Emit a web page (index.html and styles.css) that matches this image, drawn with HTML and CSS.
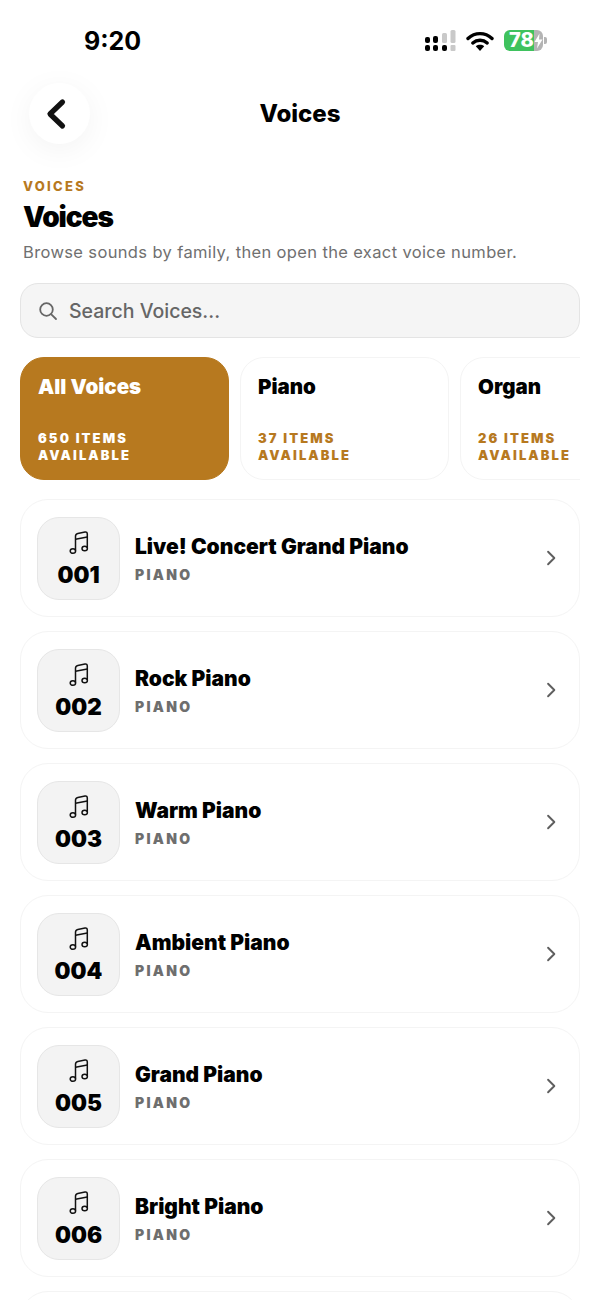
FILE: index.html
```html
<!DOCTYPE html>
<html lang="en">
<head>
  <meta charset="UTF-8" />
  <meta name="viewport" content="width=device-width, initial-scale=1.0"/>
  <title>Voices</title>
  <link rel="stylesheet" href="styles.css">
</head>
<body>
  <svg class="defs" width="0" height="0">
    <symbol id="note" viewBox="0 0 20 26">
      <path d="M6.500 20.500V6.200C6.500 4.600 7.300 3.700 8.800 3.400L16 2C17.500 1.700 18.300 2.500 18.300 4V18" fill="none" stroke="currentColor" stroke-width="1.500" stroke-linejoin="round"/>
      <path d="M6.500 9.300L18.300 7" fill="none" stroke="currentColor" stroke-width="1.500"/>
      <ellipse cx="3.900" cy="21" rx="2.700" ry="2.300" fill="none" stroke="currentColor" stroke-width="1.500"/>
      <ellipse cx="15.700" cy="18.500" rx="2.700" ry="2.300" fill="none" stroke="currentColor" stroke-width="1.500"/>
    </symbol>
    <symbol id="chev" viewBox="0 0 24 24">
      <path d="M8.500 4.500L16 12L8.500 19.500" fill="none" stroke="currentColor" stroke-width="2.300" stroke-linecap="round" stroke-linejoin="round"/>
    </symbol>
  </svg>

  <div class="status">
    <span class="time">9:20</span>
    <div class="status-icons">
      <svg class="signal" width="31" height="21" viewBox="0 0 31 21">
        <rect x="0" y="7" width="5" height="6" rx="2" fill="#000"/>
        <rect x="0" y="15" width="5" height="6" rx="2" fill="#000"/>
        <rect x="8" y="6" width="5" height="7" rx="2" fill="#000"/>
        <rect x="8" y="15" width="5" height="6" rx="2" fill="#000"/>
        <rect x="17" y="3" width="5" height="10" rx="1.500" fill="#c9c9c9"/>
        <rect x="17" y="15" width="5" height="6" rx="2" fill="#000"/>
        <rect x="25.500" y="0" width="5" height="13" rx="1.500" fill="#c9c9c9"/>
        <rect x="25.500" y="15" width="5" height="6" rx="1" fill="#c9c9c9"/>
      </svg>
      <svg class="wifi" width="28" height="20" viewBox="0 0 28 20">
        <path d="M2 7.500C9 1 19 1 26 7.500" fill="none" stroke="#000" stroke-width="3.400" stroke-linecap="round"/>
        <path d="M6.800 12C11 8.300 17 8.300 21.200 12" fill="none" stroke="#000" stroke-width="3.400" stroke-linecap="round"/>
        <path d="M14 20L9.800 15.200C12.200 13.300 15.800 13.300 18.200 15.200Z" fill="#000"/>
      </svg>
      <div class="battery">
        <span class="battery-num">78</span>
        <svg class="bolt" width="9" height="16" viewBox="0 0 9 15"><path d="M5.500 0L0.500 8.500H4L3 15L8.500 6H5Z" fill="#fff"/></svg>
      </div>
      <span class="battery-cap"></span>
    </div>
  </div>

  <div class="nav">
    <button class="back">
      <svg width="24" height="34" viewBox="0 0 24 34"><path d="M17.500 5L5 17L17.500 29" fill="none" stroke="#111" stroke-width="5.200" stroke-linecap="round" stroke-linejoin="round"/></svg>
    </button>
    <div class="nav-title">Voices</div>
  </div>

  <div class="intro">
    <div class="eyebrow">VOICES</div>
    <h1>Voices</h1>
    <p class="lead">Browse sounds by family, then open the exact voice number.</p>
  </div>

  <div class="search">
    <svg width="20" height="20" viewBox="0 0 20 20"><circle cx="8.500" cy="8.500" r="6.300" fill="none" stroke="#666" stroke-width="1.800"/><path d="M13.300 13.300L18 18" stroke="#666" stroke-width="1.800" stroke-linecap="round"/></svg>
    <span>Search Voices...</span>
  </div>

  <div class="chips">
    <div class="chip active">
      <div class="chip-name">All Voices</div>
      <div class="chip-count">650 ITEMS<br>AVAILABLE</div>
    </div>
    <div class="chip">
      <div class="chip-name">Piano</div>
      <div class="chip-count">37 ITEMS<br>AVAILABLE</div>
    </div>
    <div class="chip">
      <div class="chip-name">Organ</div>
      <div class="chip-count">26 ITEMS<br>AVAILABLE</div>
    </div>
  </div>

  <div class="list">
    <div class="row">
      <div class="tile"><svg class="note"><use href="#note"/></svg><span>001</span></div>
      <div class="info"><div class="name">Live! Concert Grand Piano</div><div class="family">PIANO</div></div>
      <svg class="chevron"><use href="#chev"/></svg>
    </div>
    <div class="row">
      <div class="tile"><svg class="note"><use href="#note"/></svg><span>002</span></div>
      <div class="info"><div class="name">Rock Piano</div><div class="family">PIANO</div></div>
      <svg class="chevron"><use href="#chev"/></svg>
    </div>
    <div class="row">
      <div class="tile"><svg class="note"><use href="#note"/></svg><span>003</span></div>
      <div class="info"><div class="name">Warm Piano</div><div class="family">PIANO</div></div>
      <svg class="chevron"><use href="#chev"/></svg>
    </div>
    <div class="row">
      <div class="tile"><svg class="note"><use href="#note"/></svg><span>004</span></div>
      <div class="info"><div class="name">Ambient Piano</div><div class="family">PIANO</div></div>
      <svg class="chevron"><use href="#chev"/></svg>
    </div>
    <div class="row">
      <div class="tile"><svg class="note"><use href="#note"/></svg><span>005</span></div>
      <div class="info"><div class="name">Grand Piano</div><div class="family">PIANO</div></div>
      <svg class="chevron"><use href="#chev"/></svg>
    </div>
    <div class="row">
      <div class="tile"><svg class="note"><use href="#note"/></svg><span>006</span></div>
      <div class="info"><div class="name">Bright Piano</div><div class="family">PIANO</div></div>
      <svg class="chevron"><use href="#chev"/></svg>
    </div>
    <div class="row"></div>
  </div>
</body>
</html>
```

FILE: styles.css
```css
html, body {
  margin: 0;
  height: 1300px;
  overflow: hidden;
  background: #fff;
}
body {
  font-family: Inter, "Noto Sans", sans-serif;
  color: #000;
}
.defs {
  display: block;
  height: 0;
}

/* status bar */
.status {
  height: 83px;
  display: flex;
  justify-content: space-between;
  align-items: flex-start;
  padding: 0 53px 0 84px;
  box-sizing: border-box;
}
.time {
  font-size: 25px;
  font-weight: 700;
  line-height: 30px;
  margin-top: 26px;
}
.status-icons {
  display: flex;
  align-items: center;
  margin-top: 30px;
}
.signal {
  margin-right: 10px;
}
.wifi {
  margin-right: 10px;
}
.battery {
  width: 39px;
  height: 21px;
  border-radius: 6px;
  background: linear-gradient(90deg, #3fc25e 0, #3fc25e 76%, #b4b4b4 76%);
  display: flex;
  align-items: center;
  padding-left: 5px;
  box-sizing: border-box;
}
.battery-num {
  color: #fff;
  font-size: 20px;
  font-weight: 800;
  line-height: 21px;
}
.bolt {
  flex: none;
}
.battery-cap {
  width: 3px;
  height: 7px;
  margin-left: 1px;
  background: #b4b4b4;
  border-radius: 0 2px 2px 0;
}

/* nav */
.nav {
  height: 61px;
  padding: 0 29px;
  display: flex;
  align-items: center;
  justify-content: center;
  position: relative;
}
.back {
  position: absolute;
  left: 29px;
  top: 0;
  width: 61px;
  height: 61px;
  border: none;
  padding: 0 6px 0 0;
  border-radius: 50%;
  background: #fff;
  box-shadow: 0 6px 30px rgba(0,0,0,0.05);
  display: flex;
  align-items: center;
  justify-content: center;
}
.nav-title {
  font-size: 24px;
  font-weight: 800;
  line-height: 61px;
}

/* heading */
.intro {
  padding: 33px 23px 0;
}
.eyebrow {
  color: #b7791f;
  font-size: 13px;
  font-weight: 800;
  letter-spacing: 2.3px;
  line-height: 18px;
}
h1 {
  margin: 2px 0 0;
  font-size: 28px;
  font-weight: 900;
  line-height: 40px;
  letter-spacing: -1.1px;
}
.lead {
  margin: 3px 0 0;
  color: #707070;
  font-size: 16.500px;
  line-height: 24px;
  letter-spacing: 0.360px;
}

/* search */
.search {
  margin: 19px 20px 0;
  height: 55px;
  box-sizing: border-box;
  border: 1px solid #e4e4e4;
  border-radius: 18px;
  background: #f5f5f5;
  padding-left: 17px;
  display: flex;
  align-items: center;
  gap: 11px;
  color: #666;
  font-size: 19.500px;
  font-weight: 500;
}

/* family chips */
.chips {
  margin: 19px 20px 0;
  display: flex;
  gap: 11px;
  overflow: hidden;
}
.chip {
  flex: 0 0 209px;
  height: 123px;
  box-sizing: border-box;
  border: 1px solid #f4f4f4;
  border-radius: 24px;
  padding: 16px 17px 16px;
  display: flex;
  flex-direction: column;
  justify-content: space-between;
  background: #fff;
}
.chip.active {
  background: #b7791f;
  border-color: #b7791f;
  color: #fff;
}
.chip-name {
  font-size: 20.500px;
  font-weight: 900;
  line-height: 26px;
}
.chip-count {
  color: #b7791f;
  font-size: 13px;
  font-weight: 900;
  letter-spacing: 2.1px;
  line-height: 16.500px;
}
.chip.active .chip-count {
  color: #fff;
}

/* voice list */
.list {
  margin: 19px 20px 0;
  height: 801px;
  overflow: hidden;
  display: flex;
  flex-direction: column;
  gap: 14px;
}
.row {
  flex: 0 0 118px;
  box-sizing: border-box;
  border: 1px solid #f4f4f4;
  border-radius: 28px;
  padding: 0 16px;
  display: flex;
  align-items: center;
  background: #fff;
}
.tile {
  flex: none;
  width: 83px;
  height: 83px;
  box-sizing: border-box;
  border: 1px solid #e6e6e6;
  border-radius: 22px;
  background: #f3f3f3;
  padding-top: 2px;
  display: flex;
  flex-direction: column;
  align-items: center;
  justify-content: center;
}
.tile span {
  font-size: 22.500px;
  font-weight: 900;
  line-height: 28px;
  margin-top: 5px;
}
.note {
  width: 20px;
  height: 26px;
  color: #111;
}
.info {
  margin-left: 15px;
  margin-top: 1px;
  flex: 1;
}
.name {
  font-size: 21px;
  font-weight: 900;
  line-height: 26px;
}
.family {
  color: #6e6e6e;
  font-size: 14px;
  font-weight: 900;
  letter-spacing: 2.300px;
  line-height: 18px;
  margin-top: 6px;
}
.chevron {
  width: 20px;
  height: 20px;
  color: #5f5f5f;
  margin-right: 2px;
}
```
